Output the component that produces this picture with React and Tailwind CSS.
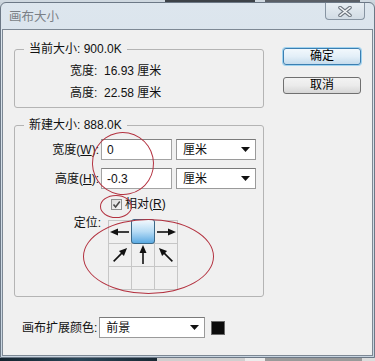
import React from 'react';

const Arrow = ({ angle }) => (
    <svg width="22" height="22" viewBox="0 0 22 22" className="block">
        <g transform={`rotate(${angle} 11 11)`}>
            <line x1="2" y1="11" x2="15" y2="11" stroke="#111" strokeWidth="1.6" />
            <polygon points="21,11 13,7.5 13,14.5" fill="#111" />
        </g>
    </svg>
);

const Caret = () => (
    <svg width="9" height="5" viewBox="0 0 9 5" className="block">
        <polygon points="0,0 9,0 4.5,5" fill="#111" />
    </svg>
);

const Combo = ({ value, width }) => (
    <div className={`${width} h-[21px] bg-white border border-[#9a9a9a] border-t-[#7a7a7a] flex items-center pl-[6px] pr-[5px]`}>
        <span className="flex-1 leading-[16px]">{value}</span>
        <Caret />
    </div>
);

const Field = ({ value }) => (
    <div className="w-[71px] h-[21px] bg-white border border-[#a3a3a3] border-t-[#838383] flex items-center pl-[5px] leading-[16px]">
        {value}
    </div>
);

const Button = ({ children, primary }) => (
    <button
        className={
            primary
                ? 'w-[78px] h-[17px] rounded-[3px] border border-[#3c7fb1] shadow-[0_0_0_1px_#9fd3f0] bg-gradient-to-b from-[#f2f8fc] via-[#e3eff8] to-[#c6dcec] text-[12px] leading-[15px] text-black'
                : 'w-[78px] h-[17px] rounded-[3px] border border-[#707070] bg-gradient-to-b from-[#f3f3f3] via-[#ebebeb] to-[#d6d6d6] text-[12px] leading-[15px] text-black'
        }
    >
        {children}
    </button>
);

export default function App() {
    return (
        <div className="w-[375px] h-[361px] relative overflow-hidden bg-[#c9d2da] font-['Liberation_Sans','Noto_Sans_CJK_SC',sans-serif] text-[12px] text-[#111]">
            {/* desktop behind, top */}
            <div className="h-[2px] flex">
                <div className="w-[165px] bg-[#cfd8e0]" />
                <div className="w-[90px] bg-[#3d4248]" />
                <div className="w-[10px] bg-[#cfd8e0]" />
                <div className="w-[95px] bg-[#5a5f66]" />
                <div className="flex-1 bg-[#cfd8e0]" />
            </div>

            {/* window */}
            <div className="h-[356px] rounded-t-[6px] border border-[#6c7886] bg-gradient-to-b from-[#dde6ee] via-[#d3dee8] to-[#c8d5e1] px-[1px] pb-[1px] flex flex-col">
                {/* title bar */}
                <div className="h-[26px] flex items-start">
                    <span className="pl-[7px] pt-[6px] text-[12.5px] leading-[16px] text-[#7a7f86]">画布大小</span>
                    <div className="ml-auto mr-[8px] w-[40px] h-[17px] rounded-b-[4px] border border-t-0 border-[#8794a2] bg-gradient-to-b from-[#e8eef3] to-[#d2dce5] flex items-center justify-center">
                        <svg width="16" height="11" viewBox="0 0 16 11">
                            <path d="M3 1.5 L13 9.5 M13 1.5 L3 9.5" stroke="#6f7780" strokeWidth="3.6" strokeLinecap="round" />
                            <path d="M3 1.5 L13 9.5 M13 1.5 L3 9.5" stroke="#f4f6f8" strokeWidth="1.6" strokeLinecap="round" />
                        </svg>
                    </div>
                </div>

                {/* client area */}
                <div className="flex-1 bg-[#f0f0f0] border border-[#7d8894] flex flex-col">
                    <div className="flex">
                        <div className="pl-[11px] pt-[11px]">
                            <fieldset className="w-[250px] border border-[#b4b4b4] rounded-[3px]">
                                <legend className="ml-[9px] px-[5px] leading-[16px]">当前大小: 900.0K</legend>
                                <div className="pt-[3px] pb-[3px] pl-[55px]">
                                    <div className="h-[22px] flex items-center">宽度:&nbsp;&nbsp;16.93 厘米</div>
                                    <div className="h-[22px] flex items-center">高度:&nbsp;&nbsp;22.58 厘米</div>
                                </div>
                            </fieldset>

                            <fieldset className="mt-[9px] w-[250px] border border-[#b4b4b4] rounded-[3px]">
                                <legend className="ml-[9px] px-[5px] leading-[16px]">新建大小: 888.0K</legend>
                                <div className="pt-[6px] pb-[6px]">
                                    <div className="h-[21px] flex items-center">
                                        <span className="w-[84px] text-right">宽度(<span className="underline">W</span>):</span>
                                        <div className="ml-[2px]"><Field value="0" /></div>
                                        <div className="ml-[4px]"><Combo value="厘米" width="w-[80px]" /></div>
                                    </div>
                                    <div className="mt-[8px] h-[21px] flex items-center">
                                        <span className="w-[84px] text-right">高度(<span className="underline">H</span>):</span>
                                        <div className="ml-[2px]"><Field value="-0.3" /></div>
                                        <div className="ml-[4px]"><Combo value="厘米" width="w-[80px]" /></div>
                                    </div>
                                    <div className="mt-[7px] h-[16px] flex items-center pl-[96px]">
                                        <div className="w-[11px] h-[11px] border border-[#8e8f8f] bg-gradient-to-br from-[#dcdcdc] to-[#f7f7f7] flex items-center justify-center">
                                            <svg width="9" height="9" viewBox="0 0 9 9">
                                                <path d="M1.5 4.5 L3.6 7 L7.8 1.5" stroke="#4a4a4a" strokeWidth="1.6" fill="none" />
                                            </svg>
                                        </div>
                                        <span className="ml-[3px] leading-[16px]">相对(<span className="underline">R</span>)</span>
                                    </div>
                                    <div className="mt-[8px] flex items-start">
                                        <span className="w-[86px] text-right -mt-[5px] leading-[16px]">定位:</span>
                                        <div className="ml-[7px] grid grid-cols-[repeat(3,23px)] grid-rows-[repeat(3,23px)] border-l border-t border-[#c6c6c6] bg-[#f0f0f0]">
                                            <div className="border-r border-b border-[#c6c6c6]"><Arrow angle={180} /></div>
                                            <div className="relative border-r border-b border-[#c6c6c6]">
                                                <div className="absolute -left-[1px] -top-[2px] w-[24px] h-[25px] rounded-[3px] border border-[#3a6888] bg-gradient-to-b from-[#f3f9fd] via-[#b7dcf5] to-[#5aaae2]" />
                                            </div>
                                            <div className="border-r border-b border-[#c6c6c6]"><Arrow angle={0} /></div>
                                            <div className="border-r border-b border-[#c6c6c6]"><Arrow angle={-45} /></div>
                                            <div className="border-r border-b border-[#c6c6c6]"><Arrow angle={-90} /></div>
                                            <div className="border-r border-b border-[#c6c6c6]"><Arrow angle={-135} /></div>
                                            <div className="border-r border-b border-[#c6c6c6]" />
                                            <div className="border-r border-b border-[#c6c6c6]" />
                                            <div className="border-r border-b border-[#c6c6c6]" />
                                        </div>
                                    </div>
                                </div>
                            </fieldset>
                        </div>

                        <div className="ml-[19px] pt-[18px] flex flex-col gap-[12px]">
                            <Button primary>确定</Button>
                            <Button>取消</Button>
                        </div>
                    </div>

                    <div className="mt-[20px] pl-[19px] flex items-center">
                        <span className="leading-[16px]">画布扩展颜色:</span>
                        <div className="ml-[2px]"><Combo value="前景" width="w-[106px]" /></div>
                        <div className="ml-[6px] w-[14px] h-[14px] bg-[#0b0b0b] border border-[#6a6a6a]" />
                    </div>
                </div>
            </div>

            {/* desktop behind, bottom */}
            <div className="h-[3px] flex">
                <div className="w-[157px] bg-gradient-to-r from-[#14242f] via-[#2a4658] to-[#1a2a35]" />
                <div className="w-[88px] bg-[#cfcfcf]" />
                <div className="w-[20px] bg-[#ececec]" />
                <div className="w-[97px] bg-[#9a9a9a]" />
                <div className="flex-1 bg-[#dcdcdc]" />
            </div>

            {/* red annotation marks */}
            <div className="absolute left-[92px] top-[132px] w-[62px] h-[63px] rounded-[50%] border border-[#b3313f] -rotate-12" />
            <div className="absolute left-[100px] top-[195px] w-[32px] h-[23px] rounded-[50%] border border-[#b3313f]" />
            <div className="absolute left-[83px] top-[219px] w-[131px] h-[75px] rounded-[50%] border border-[#b3313f]" />
        </div>
    );
}
